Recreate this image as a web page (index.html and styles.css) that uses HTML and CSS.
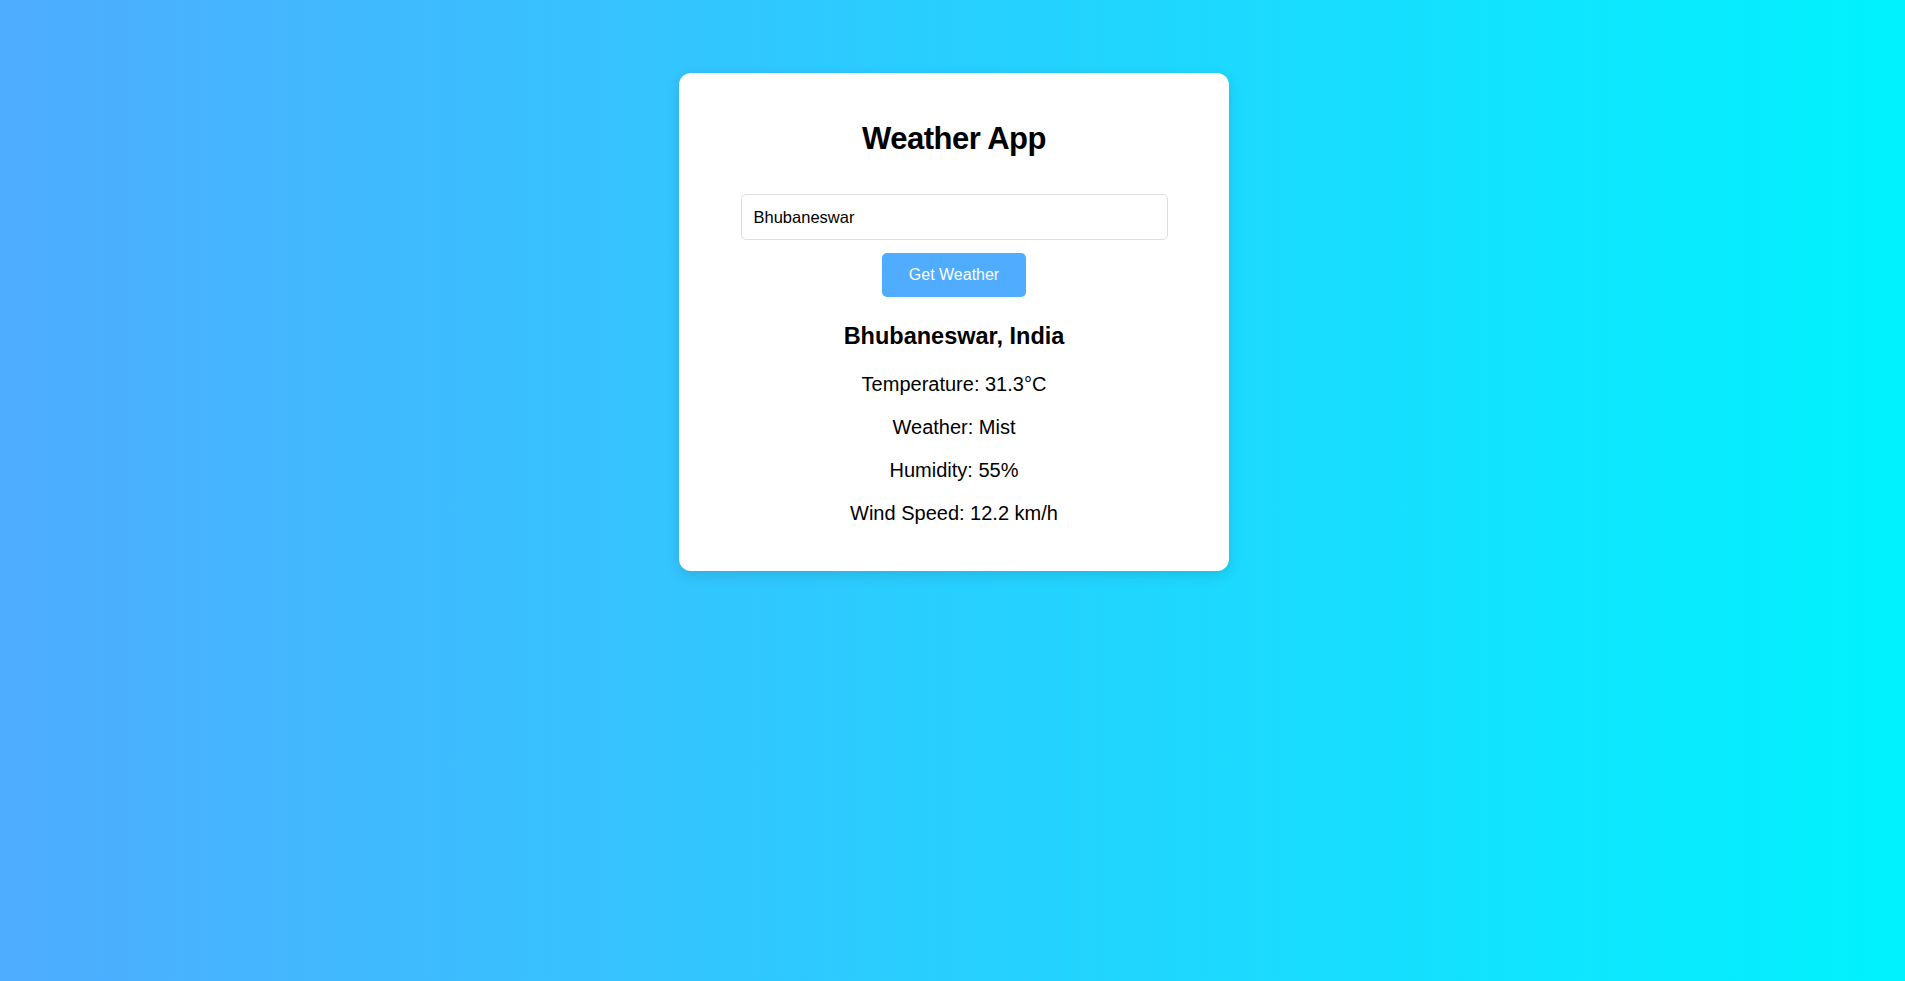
FILE: index.html
```html
<!DOCTYPE html>
<html lang="en">
<head>
<meta charset="UTF-8">
<title>Weather App</title>
<link rel="stylesheet" href="styles.css">
</head>
<body>
  <div class="card">
    <h1 class="title">Weather App</h1>
    <div class="search">
      <input class="city-input" type="text" value="Bhubaneswar">
      <button class="btn">Get Weather</button>
    </div>
    <div class="result">
      <h2 class="place">Bhubaneswar, India</h2>
      <p class="info">Temperature: 31.3°C</p>
      <p class="info">Weather: Mist</p>
      <p class="info">Humidity: 55%</p>
      <p class="info">Wind Speed: 12.2 km/h</p>
    </div>
  </div>
</body>
</html>
```
FILE: styles.css
```css
html, body {
  margin: 0;
  padding: 0;
}
body {
  min-height: 100vh;
  background: linear-gradient(to right, #4facfe, #00f2fe);
  font-family: "Liberation Sans", Arial, sans-serif;
  color: #000;
  padding-top: 73px;
  padding-left: 3px;
  box-sizing: border-box;
  overflow: hidden;
}
.card {
  width: 500px;
  margin: 0 auto;
  padding: 25px 25px 26px;
  background: #fff;
  border-radius: 12px;
  box-shadow: 0 4px 14px rgba(0, 0, 0, 0.12);
  text-align: center;
}
.title {
  margin: 22px 0 0;
  font-size: 31px;
  line-height: 37px;
  letter-spacing: -0.5px;
  font-weight: bold;
}
.search {
  display: flex;
  flex-direction: column;
  align-items: center;
  margin-top: 37px;
}
.city-input {
  box-sizing: border-box;
  width: 427px;
  height: 46px;
  padding: 0 12px;
  border: 1px solid #ddd;
  border-radius: 5px;
  font-family: "Liberation Sans", Arial, sans-serif;
  font-size: 16.5px;
  color: #000;
  outline: none;
}
.btn {
  box-sizing: border-box;
  margin-top: 13px;
  width: 144px;
  height: 44px;
  padding: 0;
  border: none;
  border-radius: 5px;
  background: #4facfe;
  color: #fff;
  font-family: "Liberation Sans", Arial, sans-serif;
  font-size: 16px;
  cursor: pointer;
}
.place {
  margin: 26px 0 24px;
  font-size: 23.5px;
  line-height: 26px;
  font-weight: bold;
}
.info {
  margin: 20px 0;
  font-size: 20px;
  line-height: 23px;
}
```
